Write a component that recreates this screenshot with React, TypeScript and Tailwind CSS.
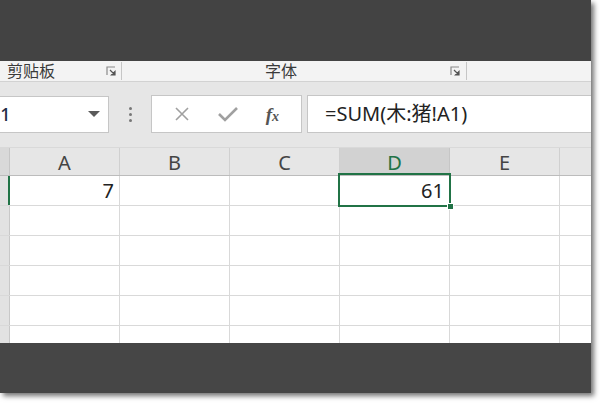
import React from "react";

const font = { fontFamily: '"Noto Sans", "Noto Sans CJK SC", sans-serif' };

function Launcher() {
  return (
    <svg width="11" height="11" viewBox="0 0 11 11" className="shrink-0">
      <path d="M1 9V1h8" fill="none" stroke="#8a8a8a" strokeWidth="1.2" />
      <path d="M4 4l5 5M9 5.5V9H5.5z" fill="#555" stroke="#555" strokeWidth="1.2" />
    </svg>
  );
}

const cols = ["A", "B", "C", "D", "E"];

function Row({ first, last }: { first?: boolean; last?: boolean }) {
  return (
    <div className={`flex ${last ? "flex-1" : "h-[30px] border-b border-[#d9d9d9]"}`}>
      <div className={`w-[10px] shrink-0 bg-[#e2e2e2] border-r ${first ? "border-r-2 border-[#217346]" : "border-[#c8c8c8]"}`} />
      {cols.map((c) => (
        <div key={c} className="relative w-[110px] shrink-0 border-r border-[#d9d9d9] bg-white flex items-center justify-end pr-[5px] text-[20px] text-[#222] leading-none">
          {first && c === "A" ? "7" : null}
          {first && c === "D" ? (
            <>
              <span className="relative z-10">61</span>
              <div className="absolute left-[-2px] top-[-3px] right-[-2px] bottom-[-2px] border-2 border-[#217346] z-20" />
              <div className="absolute right-[-5px] bottom-[-5px] w-[7px] h-[7px] bg-[#217346] border border-white z-30" />
            </>
          ) : null}
        </div>
      ))}
      <div className="flex-1 bg-white" />
    </div>
  );
}

export default function App() {
  return (
    <div className="w-[600px] h-[404px] bg-white overflow-hidden" style={font}>
      <div className="w-[591px] h-[393px] flex flex-col overflow-hidden shadow-[3px_3px_5px_rgba(0,0,0,0.55)]">
        <div className="h-[61px] shrink-0 bg-[#434343]" />
        <div className="h-[21px] shrink-0 bg-[#f3f3f3] border-b border-[#d2d2d2] flex items-center text-[16px] text-[#3a3a3a] leading-none">
          <div className="w-[122px] shrink-0 flex items-center pl-[7px] pr-[4px] border-r border-[#c6c6c6] h-[18px]">
            <span>剪贴板</span>
            <span className="flex-1" />
            <Launcher />
          </div>
          <div className="w-[345px] shrink-0 flex items-center pr-[5px] border-r border-[#c6c6c6] h-[18px]">
            <span className="ml-[143px]">字体</span>
            <span className="flex-1" />
            <Launcher />
          </div>
          <div className="flex-1" />
        </div>
        <div className="h-[65px] shrink-0 bg-[#e6e6e6] flex items-center pb-[1px]">
          <div className="w-[109px] h-[37px] bg-white border border-[#c6c6c6] border-l-0 flex items-center overflow-hidden">
            <span className="ml-[-13px] text-[18px] font-medium text-[#1f2a44]">D1</span>
            <span className="flex-1" />
            <svg width="12" height="7" viewBox="0 0 12 7" className="mr-[8px]">
              <path d="M0 0h12L6 6z" fill="#5a5a5a" />
            </svg>
          </div>
          <div className="w-[42px] flex flex-col items-center gap-[3px]">
            <span className="w-[3px] h-[3px] rounded-full bg-[#777]" />
            <span className="w-[3px] h-[3px] rounded-full bg-[#777]" />
            <span className="w-[3px] h-[3px] rounded-full bg-[#777]" />
          </div>
          <div className="w-[151px] h-[38px] bg-white border border-[#c6c6c6] flex items-center justify-around px-[8px]">
            <svg width="16" height="16" viewBox="0 0 16 16">
              <path d="M2 2l12 12M14 2L2 14" stroke="#a0a0a0" strokeWidth="1.6" />
            </svg>
            <svg width="20" height="16" viewBox="0 0 20 16">
              <path d="M1 8l6 6L19 2" fill="none" stroke="#a0a0a0" strokeWidth="2.6" />
            </svg>
            <span className="italic text-[#555] leading-none" style={{ fontFamily: '"Liberation Serif", serif' }}>
              <span className="font-bold text-[19px]">f</span><span className="font-bold text-[14px]">x</span>
            </span>
          </div>
          <div className="ml-[5px] flex-1 h-[38px] bg-white border border-[#c6c6c6] border-r-0 flex items-center pl-[17px] text-[20px] text-[#222]">
            =SUM(木:猪!A1)
          </div>
        </div>
        <div className="h-[29px] shrink-0 flex bg-[#e6e6e6] border-b border-[#bcbcbc] border-t border-t-[#d9d9d9]">
          <div className="w-[10px] shrink-0 bg-[#d9d9d9] border-r border-[#c6c6c6]" />
          {cols.map((c) => (
            <div
              key={c}
              className={`w-[110px] shrink-0 flex items-center justify-center text-[20px] leading-none pt-[3px] border-r ${
                c === "D" ? "bg-[#d2d2d2] text-[#217346] border-[#c6c6c6]" : "text-[#444] border-[#d0d0d0]"
              }`}
            >
              {c}
            </div>
          ))}
          <div className="flex-1" />
        </div>
        <div className="h-[167px] shrink-0 flex flex-col">
          <Row first />
          <Row />
          <Row />
          <Row />
          <Row />
          <Row last />
        </div>
        <div className="flex-1 bg-[#464646]" />
      </div>
    </div>
  );
}
